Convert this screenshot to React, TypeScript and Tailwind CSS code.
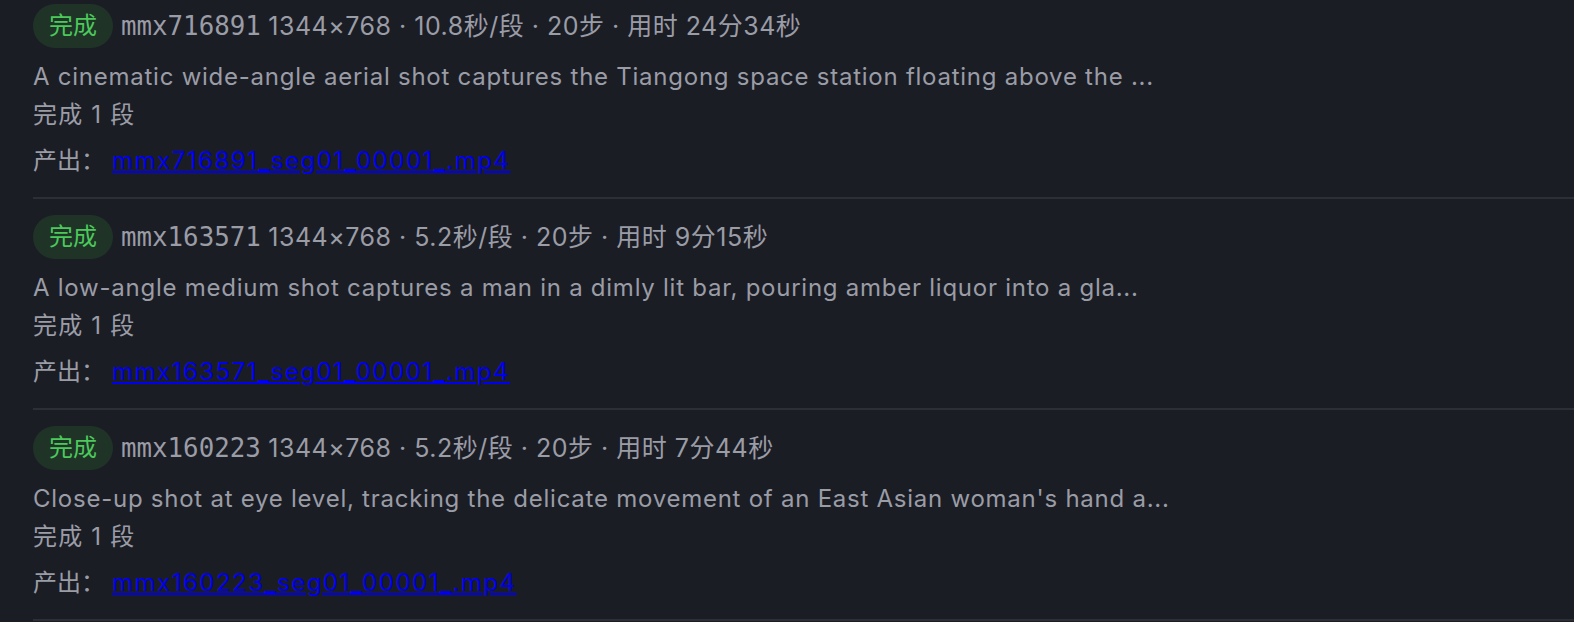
const jobs = [
  {
    id: "mmx716891",
    meta: "1344×768 · 10.8秒/段 · 20步 · 用时 24分34秒",
    prompt:
      "A cinematic wide-angle aerial shot captures the Tiangong space station floating above the ...",
  },
  {
    id: "mmx163571",
    meta: "1344×768 · 5.2秒/段 · 20步 · 用时 9分15秒",
    prompt:
      "A low-angle medium shot captures a man in a dimly lit bar, pouring amber liquor into a gla...",
  },
  {
    id: "mmx160223",
    meta: "1344×768 · 5.2秒/段 · 20步 · 用时 7分44秒",
    prompt:
      "Close-up shot at eye level, tracking the delicate movement of an East Asian woman's hand a...",
  },
];

const sans = "font-['Inter','Noto_Sans_CJK_SC',sans-serif]";

export default function App() {
  return (
    <div className={`min-h-screen bg-[#1b1d25] pl-[33px] ${sans}`}>
      {jobs.map((job) => (
        <div
          key={job.id}
          className="flex flex-col pt-[16px] pb-[17px] border-b-2 border-[#2d2f37] first:pt-[4px]"
        >
          <div className="flex items-center gap-[8px]">
            <span className="h-[44px] px-[16px] rounded-full bg-[#1f3427] text-[#4cc95b] text-[24px] leading-[44px]">
              完成
            </span>
            <span className="text-[25px] tracking-[0.5px] text-[#9a9ca6] whitespace-nowrap">
              <span className="font-['DejaVu_Sans_Mono',monospace] text-[25.8px] tracking-normal">
                {job.id}
              </span>{" "}
              {job.meta}
            </span>
          </div>
          <div className="mt-[10px] text-[24px] leading-[38px] tracking-[0.75px] text-[#9a9ca6] whitespace-nowrap">
            {job.prompt}
          </div>
          <div className="text-[24px] leading-[38px] tracking-[1.2px] text-[#9a9ca6]">完成 1 段</div>
          <div className="mt-[8px] text-[24px] leading-[38px] text-[#9a9ca6] flex">
            <span className="w-[79px]">产出：</span>
            <a href="#" className="text-[#0000ee] underline tracking-[1.5px]">
              {job.id}_seg01_00001_.mp4
            </a>
          </div>
        </div>
      ))}
    </div>
  );
}
